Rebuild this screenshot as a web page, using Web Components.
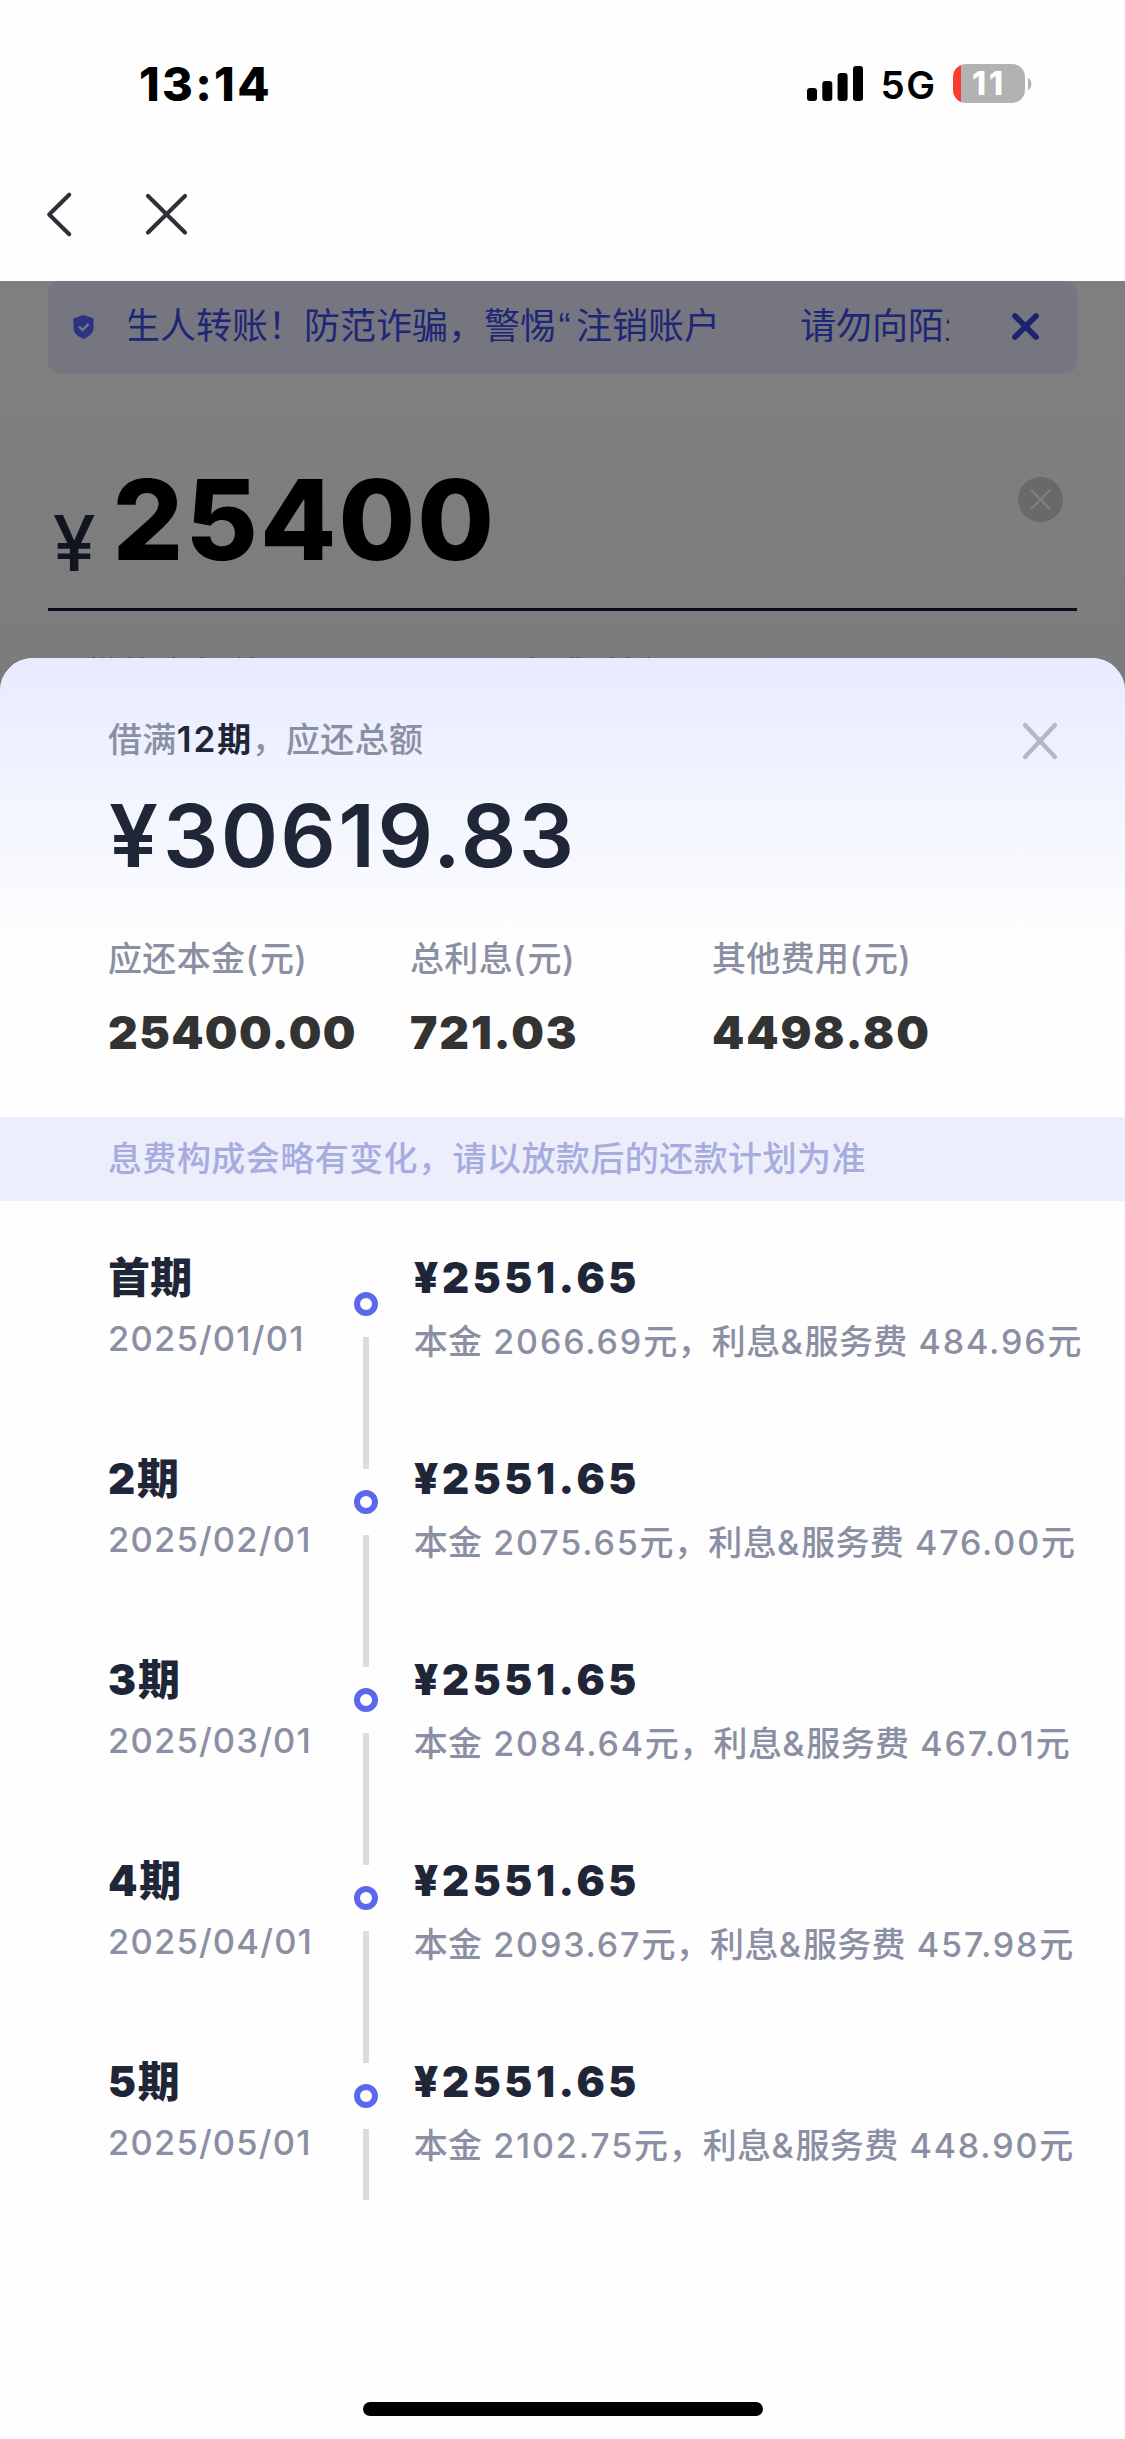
<!DOCTYPE html>
<html lang="zh-CN">
<head>
<meta charset="utf-8">
<title>还款计划</title>
<style>
  html, body { margin: 0; padding: 0; background: #fefefe; }
  body { width: 1125px; height: 2439px; overflow: hidden; font-family: Inter, "Noto Sans CJK SC", sans-serif; }
</style>
</head>
<body>
<loan-app></loan-app>
<script>
const define = (name, html, setup) => {
  const tpl = document.createElement('template');
  tpl.innerHTML = html.trim();
  customElements.define(name, class extends HTMLElement {
    connectedCallback() {
      if (this.shadowRoot) return;
      const root = this.attachShadow({ mode: 'open' });
      root.append(tpl.content.cloneNode(true));
      if (setup) setup(this, root);
    }
  });
};

// Text in which Latin runs and CJK runs carry their own tracking.
define('mixed-text', `
  <style>
    :host { display: inline; letter-spacing: .35px; white-space: pre; }
    span { letter-spacing: var(--latin, 2px); }
  </style>`, (el, root) => {
  for (const part of el.getAttribute('text').match(/[\x20-\x7e¥]+|[^\x20-\x7e¥]+/g)) {
    if (/[\x20-\x7e¥]/.test(part[0])) {
      const s = document.createElement('span');
      s.textContent = part;
      root.append(s);
    } else root.append(part);
  }
});

define('status-bar', `
  <style>
    :host { display: flex; justify-content: space-between; align-items: center; height: 167px; padding: 0 93.5px 0 139px; color: #000; }
    .time { font-size: 47px; font-weight: 800; letter-spacing: 2.3px; line-height: 60px; }
    .right { display: flex; align-items: center; }
    .net { font-size: 38.5px; font-weight: 600; letter-spacing: 1.6px; line-height: 48px; margin: 2px 16.2px 0 17.8px; }
    .battery { display: flex; align-items: center; justify-content: center; width: 71.5px; height: 39px; border-radius: 13px;
      background: linear-gradient(90deg, #ff3b30 0 8px, #b2b2b2 8px); color: #fff; font-size: 32px; font-weight: 800; line-height: 39px; letter-spacing: 3px; }
    .battery span { margin-right: -.5px; }
    svg { display: block; }
    .nub { margin-left: 3.5px; }
  </style>
  <div class="time">13:14</div>
  <div class="right">
    <svg width="56" height="35"><rect y="22" width="10" height="13" rx="3"/><rect x="15.3" y="15" width="10" height="20" rx="3"/><rect x="30.6" y="7" width="10" height="28" rx="3"/><rect x="46" y="0" width="10" height="35" rx="3"/></svg>
    <div class="net">5G</div>
    <div class="battery"><span>11</span></div>
    <svg class="nub" width="3.5" height="12"><path d="M0 0C4.6 2 4.6 10 0 12Z" fill="#b2b2b2"/></svg>
  </div>`);

define('nav-bar', `
  <style>
    :host { display: flex; align-items: flex-start; height: 90px; padding: 24px 0 0 45px; }
    svg { display: block; fill: none; stroke: #2f3037; stroke-width: 4.1; stroke-linecap: round; stroke-linejoin: round; }
    .x { margin-left: 71px; }
  </style>
  <svg width="28" height="47"><path d="M24.2 3.7 4.2 23.5 24.2 43.3"/></svg>
  <svg class="x" width="44" height="47"><path d="M4 5 41 41.5M41 5 4 41.5"/></svg>`);

define('notice-bar', `
  <style>
    :host { display: flex; align-items: center; height: 91.5px; margin: 0 48px; padding-left: 24.5px; box-sizing: border-box; border-radius: 12px; background: #75767f; color: #1e2675; }
    svg { display: block; flex: none; }
    .window { display: flex; gap: 80px; width: 819.5px; margin: -2px 0 0 35.5px; overflow: hidden; font-size: 36px; font-weight: 400; line-height: 50px; white-space: nowrap; }
    .window div { flex: none; }
    .window div:first-child { margin-left: -5px; }
    q { quotes: none; font-family: "Liberation Sans", Arial, sans-serif; line-height: 0; letter-spacing: 5.5px; margin-left: 2.5px; }
    .x { margin-left: 60.5px; }
  </style>
  <svg width="21" height="24" viewBox="0 0 21 24"><path d="M10.5 0 20.5 3.3V13.5C20.5 18.3 15.5 21.6 10.5 24 5.5 21.6.5 18.3.5 13.5V3.3Z" fill="#2b3483"/><path d="m6 11.5 3.6 3.6 6-6.2" fill="none" stroke="#75767f" stroke-width="2.4"/></svg>
  <div class="window"><div>生人转账！防范诈骗，警惕<q>“</q>注销账户</div><div>请勿向陌生</div></div>
  <svg class="x" width="33" height="33"><path d="M6 6 27 27M27 6 6 27" stroke="#1c2470" stroke-width="5.8" stroke-linecap="round"/></svg>`);

define('amount-field', `
  <style>
    :host { display: flex; align-items: flex-start; height: 235.5px; margin: 0 48px; padding-left: 4.8px; border-bottom: 3px solid #080e19; }
    .yen { font-size: 77px; font-weight: 500; line-height: 90px; color: #10151f; margin-top: 125.5px; width: 59.8px; }
    .num { font-size: 111px; font-weight: 800; line-height: 134px; letter-spacing: 2.1px; color: #000; margin-top: 80px; }
    svg { display: block; margin: 104px 14px 0 auto; }
  </style>
  <div class="yen">¥</div><div class="num">25400</div>
  <svg width="45" height="45"><circle cx="22.5" cy="22.5" r="22.5" fill="#696969"/><path d="M13 13 32 32M32 13 13 32" stroke="#808080" stroke-width="2.2"/></svg>`);

define('page-backdrop', `
  <style>
    :host { display: block; height: 420px; background: linear-gradient(#7f7f7f, #7f7f7f 120px, #7c7c7e 380px); }
    svg { display: block; margin-top: 45.5px; }
  </style>
  <notice-bar></notice-bar>
  <amount-field></amount-field>
  <svg width="1125" height="2" fill="#5c5c5f"><path d="M92 0h3v2h-3zM101 0h2v2h-2zM110 0h3v2h-3zM129 0h3v2h-3zM141 0h3v2h-3zM172 0h3v2h-3zM200 0h3v2h-3zM238 0h3v2h-3zM250 0h3v2h-3zM531 0h3v2h-3zM571 0h3v2h-3zM577 0h3v2h-3zM610 0h5v2h-5zM626 0h3v2h-3zM647 0h3v2h-3z"/><path d="M208 1h16v1h-16zM267 1h29v1h-29z" fill="#69696b"/></svg>`);

define('summary-cell', `
  <style>
    :host { display: block; width: 302px; white-space: nowrap; }
    .label { font-size: 34px; font-weight: 500; line-height: 48px; color: #8b8fa3; }
    .value { font-size: 46px; font-weight: 900; line-height: 56px; letter-spacing: var(--track, 1.9px); color: #333; margin-top: 21px; }
  </style>
  <div class="label"></div><div class="value"><slot></slot></div>`, (el, root) => {
  const t = document.createElement('mixed-text');
  t.setAttribute('text', el.getAttribute('label'));
  root.querySelector('.label').append(t);
});

define('plan-summary', `
  <style>
    :host { display: block; height: 459.3px; padding: 0 0 0 108px; border-radius: 33px 33px 0 0; background: linear-gradient(#e7ebff, #fefefe 290px); }
    .head { display: flex; justify-content: space-between; padding: 56.6px 66px 0 0; height: 48px; font-size: 34px; font-weight: 500; line-height: 48px; color: #8b8fa3; letter-spacing: .35px; }
    b { font-weight: 600; color: #1f2637; }
    b span { font-size: 35px; letter-spacing: 2px; }
    svg { display: block; margin-top: 6.4px; }
    .total { font-size: 87px; font-weight: 600; line-height: 104px; letter-spacing: 2.3px; color: #1f2637; margin: 21px 0 47.5px 1px; }
    .total span { letter-spacing: 5px; }
    .cells { display: flex; }
    .cells :first-child { --track: 1.4px; }
  </style>
  <div class="head">
    <div>借满<b><span>12</span>期</b>，应还总额</div>
    <svg width="38" height="40"><path d="M4 4 34 36M34 4 4 36" stroke="#b5b8c3" stroke-width="4.4" stroke-linecap="round"/></svg>
  </div>
  <div class="total"><span>¥</span>30619.83</div>
  <div class="cells">
    <summary-cell label="应还本金(元)">25400.00</summary-cell>
    <summary-cell label="总利息(元)">721.03</summary-cell>
    <summary-cell label="其他费用(元)">4498.80</summary-cell>
  </div>`);

define('plan-tip', `
  <style>
    :host { display: block; height: 83.5px; padding-left: 108px; background: #eceefc; color: #a7acdf; font-size: 34px; font-weight: 500; line-height: 84px; letter-spacing: .45px; }
  </style><slot></slot>`);

define('plan-entry', `
  <style>
    :host { display: block; height: 201px; white-space: nowrap; }
    .title { font-size: 42px; font-weight: 900; line-height: 56px; color: #1f2637; }
    .sub { font-size: 34px; font-weight: 500; line-height: 44px; color: #8b8fa3; margin-top: 14.2px; }
    :host([period]) .sub { font-size: 34.5px; margin-top: 11.3px; }
  </style>
  <div class="title"></div><div class="sub"></div>`, (el, root) => {
  const period = el.hasAttribute('period');
  const add = (sel, attr, latin) => {
    const t = document.createElement('mixed-text');
    t.setAttribute('text', el.getAttribute(attr));
    t.style.setProperty('--latin', latin);
    root.querySelector(sel).append(t);
  };
  add('.title', 'main', period ? '1.8px' : '3.6px');
  add('.sub', 'sub', period ? '1.2px' : '1.85px');
});

define('plan-rail', `
  <style>
    :host { display: flex; flex-direction: column; align-items: center; gap: 21px; width: 24px; height: 908px; overflow: hidden; padding-top: 91px; }
    i { flex: none; box-sizing: border-box; width: 24px; height: 24px; border: 6px solid #5b68eb; border-radius: 50%; }
    u { flex: none; width: 6px; height: 132px; background: #dcdcdc; }
  </style><i></i><u></u><i></i><u></u><i></i><u></u><i></i><u></u><i></i><u></u>`);

define('plan-schedule', `
  <style>
    :host { display: flex; align-items: flex-start; padding-left: 108px; }
    .col { padding-top: 49px; }
    .periods { width: 245.7px; }
    .payments { padding-left: 36px; }
  </style>
  <div class="col periods"></div><plan-rail></plan-rail><div class="col payments"></div>`, (el, root) => {
  const rows = [
    ['首期', '2025/01/01', '2066.69', '484.96'],
    ['2期', '2025/02/01', '2075.65', '476.00'],
    ['3期', '2025/03/01', '2084.64', '467.01'],
    ['4期', '2025/04/01', '2093.67', '457.98'],
    ['5期', '2025/05/01', '2102.75', '448.90'],
  ];
  const entry = (sel, main, sub, period) => {
    const e = document.createElement('plan-entry');
    e.setAttribute('main', main);
    e.setAttribute('sub', sub);
    if (period) e.setAttribute('period', '');
    root.querySelector(sel).append(e);
  };
  for (const [name, date, principal, fee] of rows) {
    entry('.periods', name, date, true);
    entry('.payments', '¥2551.65', `本金 ${principal}元，利息&服务费 ${fee}元`);
  }
});

define('plan-sheet', `
  <style>
    :host { display: flex; flex-direction: column; height: 1781px; margin-top: -43px; border-radius: 33px 33px 0 0; background: #fefefe; }
    .home { width: 400px; height: 14px; border-radius: 7px; background: #000; margin: auto auto 23.5px; }
  </style>
  <plan-summary></plan-summary>
  <plan-tip>息费构成会略有变化，请以放款后的还款计划为准</plan-tip>
  <plan-schedule></plan-schedule>
  <div class="home"></div>`);

define('loan-app', `
  <style>:host { display: block; width: 1125px; height: 2439px; }</style>
  <status-bar></status-bar>
  <nav-bar></nav-bar>
  <page-backdrop></page-backdrop>
  <plan-sheet></plan-sheet>`);
</script>
</body>
</html>
